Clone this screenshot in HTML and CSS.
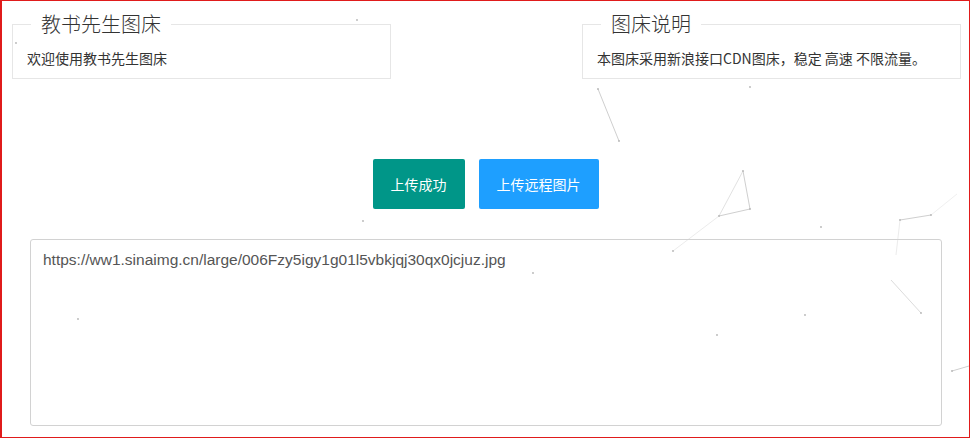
FILE: index.html
```html
<!DOCTYPE html>
<html lang="zh-CN">
<head>
<meta charset="utf-8">
<title>教书先生图床</title>
<link rel="stylesheet" href="styles.css">
</head>
<body>
<div class="page">
  <svg class="particles" width="970" height="438" viewBox="0 0 970 438" aria-hidden="true">
    <g stroke="#cfcfcf" stroke-width="1" fill="none">
      <line x1="598" y1="89" x2="619" y2="141"/>
      <line x1="743" y1="171" x2="750" y2="209"/>
      <line x1="743" y1="171" x2="719" y2="216" stroke="#e2e2e2"/>
      <line x1="750" y1="209" x2="719" y2="216"/>
      <line x1="719" y1="216" x2="673" y2="251" stroke="#ececec"/>
      <line x1="900" y1="220" x2="931" y2="215"/>
      <line x1="931" y1="215" x2="957" y2="194" stroke="#f0f0f0"/>
      <line x1="900" y1="220" x2="896" y2="255" stroke="#ececec"/>
      <line x1="891" y1="280" x2="921" y2="313" stroke="#dcdcdc"/>
      <line x1="952" y1="371" x2="969" y2="366"/>
    </g>
    <g fill="#b5b5b5">
      <circle cx="357" cy="20" r="0.9"/>
      <circle cx="16" cy="43" r="0.9"/>
      <circle cx="598" cy="89" r="0.9"/>
      <circle cx="619" cy="141" r="0.9"/>
      <circle cx="750" cy="87" r="0.9"/>
      <circle cx="743" cy="171" r="0.9"/>
      <circle cx="750" cy="209" r="0.9"/>
      <circle cx="719" cy="216" r="0.9"/>
      <circle cx="821" cy="227" r="0.9"/>
      <circle cx="900" cy="220" r="0.9"/>
      <circle cx="931" cy="215" r="0.9"/>
      <circle cx="363" cy="221" r="0.9"/>
      <circle cx="78" cy="319" r="0.9"/>
      <circle cx="533" cy="273" r="0.9"/>
      <circle cx="805" cy="315" r="0.9"/>
      <circle cx="717" cy="335" r="0.9"/>
      <circle cx="921" cy="313" r="0.9"/>
      <circle cx="952" cy="371" r="0.9"/>
      <circle cx="673" cy="251" r="0.9"/>
    </g>
  </svg>

  <div class="top">
    <fieldset class="field">
      <legend class="field-title">教书先生图床</legend>
      <div class="field-box">欢迎使用教书先生图床</div>
    </fieldset>
    <fieldset class="field">
      <legend class="field-title">图床说明</legend>
      <div class="field-box">本图床采用新浪接口CDN图床，稳定 高速 不限流量。</div>
    </fieldset>
  </div>

  <div class="actions">
    <button class="btn btn-green" type="button">上传成功</button>
    <button class="btn btn-blue" type="button">上传远程图片</button>
  </div>

  <textarea class="result" readonly>https://ww1.sinaimg.cn/large/006Fzy5igy1g01l5vbkjqj30qx0jcjuz.jpg</textarea>
</div>
</body>
</html>
```

FILE: styles.css
```css
html, body {
  margin: 0;
  padding: 0;
  background: #fff;
}

body {
  font-family: "Noto Sans CJK SC", "Liberation Sans", sans-serif;
  color: #333;
  font-size: 14px;
}

.page {
  position: relative;
  box-sizing: border-box;
  width: 970px;
  height: 438px;
  border: 1px solid #e01b1b;
  border-left-width: 2px;
  overflow: hidden;
}

.particles {
  position: absolute;
  left: -2px;
  top: -1px;
  pointer-events: none;
}

.top {
  position: relative;
  display: flex;
  justify-content: space-between;
  padding: 0 8px 0 10px;
  margin-top: 9px;
}

.field {
  box-sizing: border-box;
  width: 379px;
  margin: 0;
  padding: 0;
  border: 1px solid #e6e6e6;
  min-width: 0;
}

.field-title {
  margin-left: 18px;
  padding: 0 10px;
  font-size: 20px;
  line-height: 28px;
  font-weight: 300;
  color: #333;
}

.field-box {
  padding: 10px 14px;
  font-size: 14px;
  line-height: 20px;
  color: #333;
}

.actions {
  position: relative;
  display: flex;
  justify-content: center;
  gap: 14px;
  margin-top: 80px;
}

.btn {
  height: 50px;
  padding: 0 18px;
  border: none;
  border-radius: 2px;
  color: #fff;
  font-family: "Noto Sans CJK SC", "Liberation Sans", sans-serif;
  font-size: 14px;
  line-height: 50px;
  cursor: pointer;
}

.btn-green {
  background: #009688;
}

.btn-blue {
  background: #1e9fff;
}

.result {
  position: relative;
  display: block;
  box-sizing: border-box;
  width: 912px;
  height: 187px;
  margin: 30px 0 0 28px;
  padding: 10px 12px 6px;
  border: 1px solid #d2d2d2;
  border-radius: 3px;
  background: transparent;
  color: #555;
  font-family: "Liberation Sans", Arial, sans-serif;
  font-size: 15.5px;
  line-height: 20px;
  resize: none;
  outline: none;
}
```
